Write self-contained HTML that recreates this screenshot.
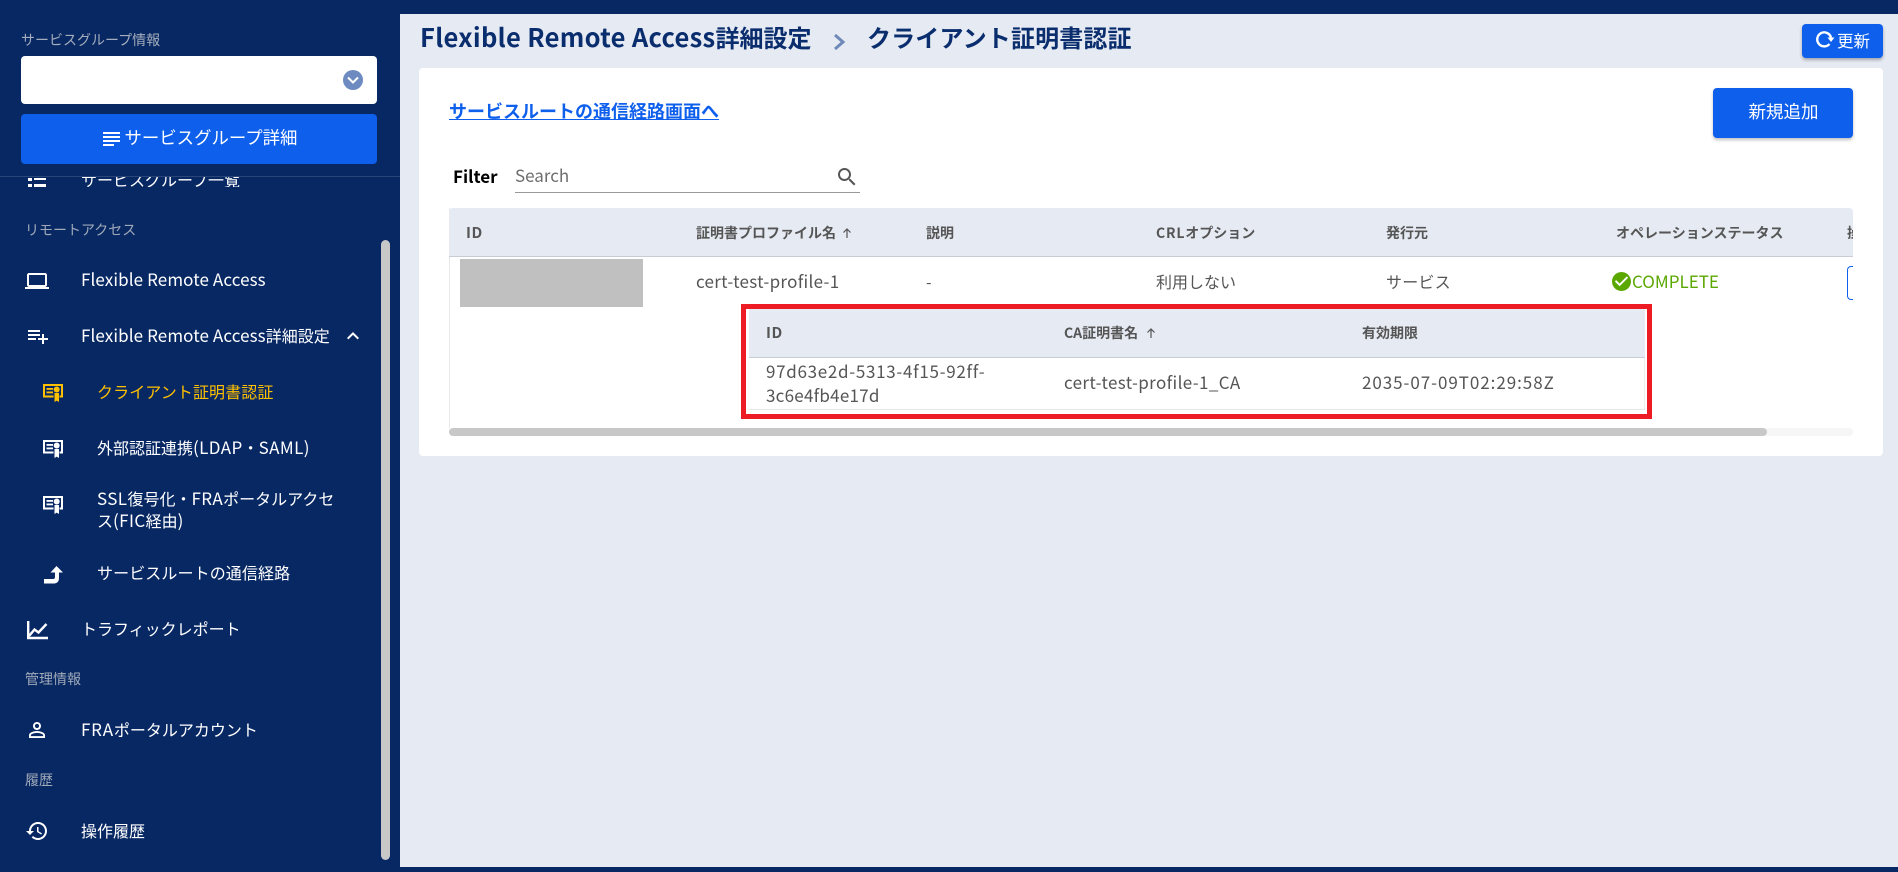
<!DOCTYPE html>
<html lang="ja"><head><meta charset="utf-8"><title>クライアント証明書認証</title>
<style>
html,body{margin:0;padding:0;width:1898px;height:872px;overflow:hidden;background:#082864}
body{position:relative;font-family:"Noto Sans CJK JP","Liberation Sans",sans-serif;color:#555}
.a,.t,svg{position:absolute}
.t{white-space:nowrap;line-height:24px}
.n{color:#fff;font-size:16px}
.g{color:#9fa9b8;font-size:14px}
.h{font-size:14px;font-weight:700;color:#555}
.d{font-size:16px;color:#555}
.L{font-size:17px}
</style></head><body>
<!-- sidebar -->
<div class="t" style="left:21px;top:28px;font-size:14px;color:#a4adbb">サービスグループ情報</div>
<div class="a" style="left:21px;top:56px;width:356px;height:48px;background:#fff;border-radius:4px"></div>
<div class="a" style="left:343px;top:70px;width:20px;height:20px;border-radius:50%;background:#6d8bc0"></div>
<svg style="left:347px;top:74px" width="12" height="12" viewBox="0 0 12 12"><path d="M1 3.500L6 8.500l5-5" fill="none" stroke="#fff" stroke-width="2"/></svg>
<div class="a" style="left:21px;top:114px;width:356px;height:50px;background:#0d5fec;border-radius:4px"></div>
<svg style="left:103px;top:132px" width="17" height="15" viewBox="0 0 17 15" fill="#fff"><rect y="0" width="17" height="2"/><rect y="4" width="17" height="2"/><rect y="8" width="17" height="2"/><rect y="12" width="11" height="2"/></svg>
<div class="t" style="left:124.500px;top:126px;font-size:17.400px;color:#fff">サービスグループ詳細</div>
<div class="a" style="left:0;top:176px;width:400px;height:1px;background:#2a4578"></div>
<div class="a" style="left:0;top:177px;width:400px;height:10px;overflow:hidden">
<div class="t n" style="left:81px;top:-10px">サービスグループ一覧</div>
<svg style="left:28px;top:0" width="19" height="12" viewBox="0 0 19 12" fill="#fff"><rect y="1" width="4" height="3"/><rect x="6" y="1" width="12" height="2"/><rect y="7" width="4" height="3"/><rect x="6" y="7" width="12" height="3"/></svg>
</div>
<div class="t g" style="left:25px;top:218px">リモートアクセス</div>

<svg style="left:25px;top:269px" width="24" height="24" viewBox="0 0 24 24" fill="#fff"><path d="M20 18c1.100 0 1.990-.9 1.990-2L22 6c0-1.100-.9-2-2-2H4c-1.100 0-2 .9-2 2v10c0 1.100.9 2 2 2H0v2h24v-2h-4zM4 6h16v10H4V6z"/></svg>
<div class="t n L" style="left:81px;top:267px;letter-spacing:.1px">Flexible Remote Access</div>

<svg style="left:26px;top:324px" width="24" height="24" viewBox="0 0 24 24" fill="#fff"><path d="M14 10H2v2h12v-2zm0-4H2v2h12V6zm4 8v-4h-2v4h-4v2h4v4h2v-4h4v-2h-4zM2 16h8v-2H2v2z"/></svg>
<div class="t n" style="left:81px;top:323px"><span class="L" style="letter-spacing:.1px">Flexible Remote Access</span>詳細設定</div>
<svg style="left:341px;top:324px" width="24" height="24" viewBox="0 0 24 24" fill="#fff"><path d="M12 8l-6 6 1.410 1.410L12 10.830l4.590 4.580L18 14z"/></svg>

<svg style="left:43px;top:384px" width="20" height="18" viewBox="0 0 20 18" fill="#ffc000"><path d="M0 0h20v13.500h-3.500v-2H18V2H2v9.500h8.500v2H0z"/><rect x="3.500" y="4" width="6.500" height="1.800"/><rect x="3.500" y="7.500" width="6.500" height="1.800"/><circle cx="13.700" cy="5.500" r="3"/><path d="M11.500 9h4.500v9l-2.200-1.400-2.300 1.400z"/></svg>
<div class="t n" style="left:97px;top:379px;color:#ffc000;letter-spacing:.1px">クライアント証明書認証</div>

<svg style="left:43px;top:440px" width="20" height="18" viewBox="0 0 20 18" fill="#fff"><path d="M0 0h20v13.500h-3.500v-2H18V2H2v9.500h8.500v2H0z"/><rect x="3.500" y="4" width="6.500" height="1.800"/><rect x="3.500" y="7.500" width="6.500" height="1.800"/><circle cx="13.700" cy="5.500" r="3"/><path d="M11.500 9h4.500v9l-2.200-1.400-2.300 1.400z"/></svg>
<div class="t n" style="left:97px;top:435px">外部認証連携<span class="L" style="letter-spacing:.4px">(LDAP</span>・<span class="L" style="letter-spacing:.4px">SAML)</span></div>

<svg style="left:43px;top:496px" width="20" height="18" viewBox="0 0 20 18" fill="#fff"><path d="M0 0h20v13.500h-3.500v-2H18V2H2v9.500h8.500v2H0z"/><rect x="3.500" y="4" width="6.500" height="1.800"/><rect x="3.500" y="7.500" width="6.500" height="1.800"/><circle cx="13.700" cy="5.500" r="3"/><path d="M11.500 9h4.500v9l-2.200-1.400-2.300 1.400z"/></svg>
<div class="t n" style="left:97px;top:486px"><span class="L" style="letter-spacing:.4px">SSL</span>復号化・<span class="L" style="letter-spacing:.4px">FRA</span>ポータルアクセ</div>
<div class="t n" style="left:97px;top:508px">ス<span class="L" style="letter-spacing:.4px">(FIC</span>経由<span class="L">)</span></div>

<svg style="left:44px;top:565px" width="19" height="19" viewBox="0 0 19 19" fill="#fff"><path d="M12.500 1L19 7.500H15V13C15 16.500 13 18.500 10 18.500H0V14H9C10.500 14 11 13 11 12V7.500H6.500Z"/></svg>
<div class="t n" style="left:97px;top:560px;letter-spacing:.1px">サービスルートの通信経路</div>

<svg style="left:27px;top:621px" width="21" height="20" viewBox="0 0 21 20" fill="none" stroke="#fff" stroke-width="2.400"><path d="M1.200 0v17h19.800"/><path d="M2 15l5.500-6.500 4 3 8-8.500"/></svg>
<div class="t n" style="left:81px;top:616px">トラフィックレポート</div>
<div class="t g" style="left:25px;top:667px">管理情報</div>

<svg style="left:25px;top:718px" width="24" height="24" viewBox="0 0 24 24" fill="#fff"><path d="M12 5.900c1.160 0 2.100.94 2.100 2.100s-.94 2.100-2.100 2.100S9.900 9.160 9.900 8s.94-2.100 2.100-2.100m0 9c2.970 0 6.100 1.460 6.100 2.100v1.100H5.900V17c0-.64 3.130-2.100 6.100-2.100M12 4C9.790 4 8 5.790 8 8s1.790 4 4 4 4-1.790 4-4-1.790-4-4-4zm0 9c-2.670 0-8 1.340-8 4v3h16v-3c0-2.660-5.330-4-8-4z"/></svg>
<div class="t n" style="left:81px;top:717px"><span class="L" style="letter-spacing:.8px">FRA</span>ポータルアカウント</div>
<div class="t g" style="left:25px;top:768px">履歴</div>

<svg style="left:25px;top:819px" width="24" height="24" viewBox="0 0 24 24" fill="#fff"><path d="M13 3c-4.970 0-9 4.030-9 9H1l3.890 3.890.07.14L9 12H6c0-3.870 3.130-7 7-7s7 3.130 7 7-3.130 7-7 7c-1.930 0-3.680-.79-4.940-2.060l-1.420 1.420C8.270 19.990 10.510 21 13 21c4.970 0 9-4.030 9-9s-4.030-9-9-9zm-1 5v5l4.280 2.540.72-1.210-3.500-2.080V8H12z"/></svg>
<div class="t n" style="left:81px;top:818px">操作履歴</div>

<div class="a" style="left:381px;top:240px;width:9px;height:620px;background:#c8c8c8;border-radius:5px"></div>

<!-- main -->
<div class="a" style="left:400px;top:14px;width:1498px;height:853px;background:#e6eaf3"></div>
<div class="t" style="left:420px;top:19px;font-size:24px;line-height:36px;font-weight:700;color:#0a2d6e"><span style="font-size:25.500px;letter-spacing:.3px">Flexible Remote Access</span>詳細設定</div>
<svg style="left:833px;top:33px" width="14" height="18" viewBox="0 0 14 18"><path d="M2 2l8 7-8 7" fill="none" stroke="#6f89b8" stroke-width="3"/></svg>
<div class="t" style="left:867px;top:19px;font-size:24px;line-height:36px;font-weight:700;color:#0a2d6e;letter-spacing:.15px">クライアント証明書認証</div>

<div class="a" style="left:1802px;top:24px;width:81px;height:34px;background:#0d5fec;border-radius:4px;box-shadow:0 2px 3px rgba(0,0,0,.3)"></div>
<svg style="left:1815px;top:31px" width="20" height="18" viewBox="0 0 20 18"><path d="M14.500 13A7 7 0 1 1 16 6.500" fill="none" stroke="#fff" stroke-width="2.400"/><path d="M12.500 6.500h7l-3.500 4.500z" fill="#fff"/></svg>
<div class="t" style="left:1837px;top:28px;font-size:16.500px;color:#fff">更新</div>

<div class="a" style="left:419px;top:68px;width:1464px;height:388px;background:#fff;border-radius:4px"></div>
<div class="t" style="left:449px;top:99px;font-size:18px;font-weight:700;color:#0d5fec;text-decoration:underline">サービスルートの通信経路画面へ</div>
<div class="a" style="left:1713px;top:88px;width:140px;height:50px;background:#0d5fec;border-radius:4px;box-shadow:0 2px 3px rgba(0,0,0,.25)"></div>
<div class="t" style="left:1748.500px;top:100px;font-size:17.500px;color:#fff">新規追加</div>

<div class="t" style="left:453px;top:164px;font-size:17px;font-weight:700;color:#000">Filter</div>
<div class="t" style="left:515px;top:163px;font-size:17px;color:#6e6e6e">Search</div>
<div class="a" style="left:515px;top:192px;width:345px;height:1px;background:#999"></div>
<svg style="left:835px;top:165px" width="24" height="24" viewBox="0 0 24 24" fill="#555"><path d="M15.500 14h-.79l-.28-.27C15.410 12.590 16 11.110 16 9.500 16 5.910 13.090 3 9.500 3S3 5.910 3 9.500 5.910 16 9.500 16c1.610 0 3.090-.59 4.230-1.570l.27.28v.79l5 4.990L20.490 19l-4.990-5zm-6 0C7.010 14 5 11.990 5 9.500S7.010 5 9.500 5 14 7.010 14 9.500 11.990 14 9.500 14z"/></svg>

<!-- outer table -->
<div class="a" style="left:449px;top:208px;width:1404px;height:220px;border-left:1px solid #e8e8e8;box-sizing:border-box"></div>
<div class="a" style="left:449px;top:208px;width:1404px;height:48px;background:#e6eaf3;border-bottom:1px solid #c8ccd6;border-radius:4px 4px 0 0"></div>
<div class="t h" style="left:466px;top:221px;font-size:15px;letter-spacing:.6px">ID</div>
<div class="t h" style="left:696px;top:221px">証明書プロファイル名</div>
<svg style="left:841px;top:226px" width="12" height="14" viewBox="0 0 12 14"><path d="M6 12V3M2.500 6.500L6 3l3.500 3.500" fill="none" stroke="#555" stroke-width="1.200"/></svg>
<div class="t h" style="left:926px;top:221px">説明</div>
<div class="t h" style="left:1156px;top:221px"><span style="letter-spacing:.8px">CRL</span>オプション</div>
<div class="t h" style="left:1386px;top:221px">発行元</div>
<div class="t h" style="left:1616px;top:221px">オペレーションステータス</div>
<div class="a" style="left:1847px;top:221px;width:6px;height:24px;overflow:hidden"><div class="t h" style="left:0;top:0">操作</div></div>

<div class="a" style="left:460px;top:259px;width:183px;height:48px;background:#c0c0c0"></div>
<div class="t d L" style="left:696px;top:269px;letter-spacing:.3px">cert-test-profile-1</div>
<div class="t d" style="left:926px;top:269px">-</div>
<div class="t d" style="left:1156px;top:269px">利用しない</div>
<div class="t d" style="left:1386px;top:269px;letter-spacing:.2px">サービス</div>
<svg style="left:1612px;top:272px" width="19" height="19" viewBox="2 2 20 20" fill="#5aa700"><path d="M12 2C6.480 2 2 6.480 2 12s4.480 10 10 10 10-4.480 10-10S17.520 2 12 2zm-2 15l-5-5 1.410-1.410L10 14.170l7.590-7.590L19 8l-9 9z"/></svg>
<div class="t L" style="left:1632px;top:269px;color:#5aa700">COMPLETE</div>
<div class="a" style="left:1847px;top:266px;width:6px;height:34px;overflow:hidden"><div class="a" style="left:0;top:0;width:40px;height:32px;border:1px solid #0d5fec;border-radius:4px"></div></div>

<!-- red box + inner table -->
<div class="a" style="left:741px;top:304px;width:911px;height:115px;border:5px solid #ed1c24;box-sizing:border-box;background:#fff"></div>
<div class="a" style="left:749px;top:309px;width:896px;height:101px;border-right:1px solid #eee;border-bottom:1px solid #e8e8e8;box-sizing:border-box"></div>
<div class="a" style="left:749px;top:309px;width:896px;height:48px;background:#e6eaf3;border-bottom:1px solid #c8ccd6"></div>
<div class="t h" style="left:766px;top:321px;font-size:15px;letter-spacing:.6px">ID</div>
<div class="t h" style="left:1064px;top:321px">CA証明書名</div>
<svg style="left:1145px;top:326px" width="12" height="14" viewBox="0 0 12 14"><path d="M6 12V3M2.500 6.500L6 3l3.500 3.500" fill="none" stroke="#555" stroke-width="1.200"/></svg>
<div class="t h" style="left:1362px;top:321px">有効期限</div>
<div class="t d L" style="left:766px;top:359px;letter-spacing:.7px">97d63e2d-5313-4f15-92ff-</div>
<div class="t d L" style="left:766px;top:383px;letter-spacing:.25px">3c6e4fb4e17d</div>
<div class="t d L" style="left:1064px;top:370px;letter-spacing:.37px">cert-test-profile-1_CA</div>
<div class="t d L" style="left:1362px;top:370px;letter-spacing:.95px">2035-07-09T02:29:58Z</div>

<!-- h scrollbar -->
<div class="a" style="left:449px;top:428px;width:1404px;height:8px;background:#f6f6f6;border-radius:4px"></div>
<div class="a" style="left:449px;top:428px;width:1318px;height:8px;background:#c8c8c8;border-radius:4px"></div>
</body></html>
